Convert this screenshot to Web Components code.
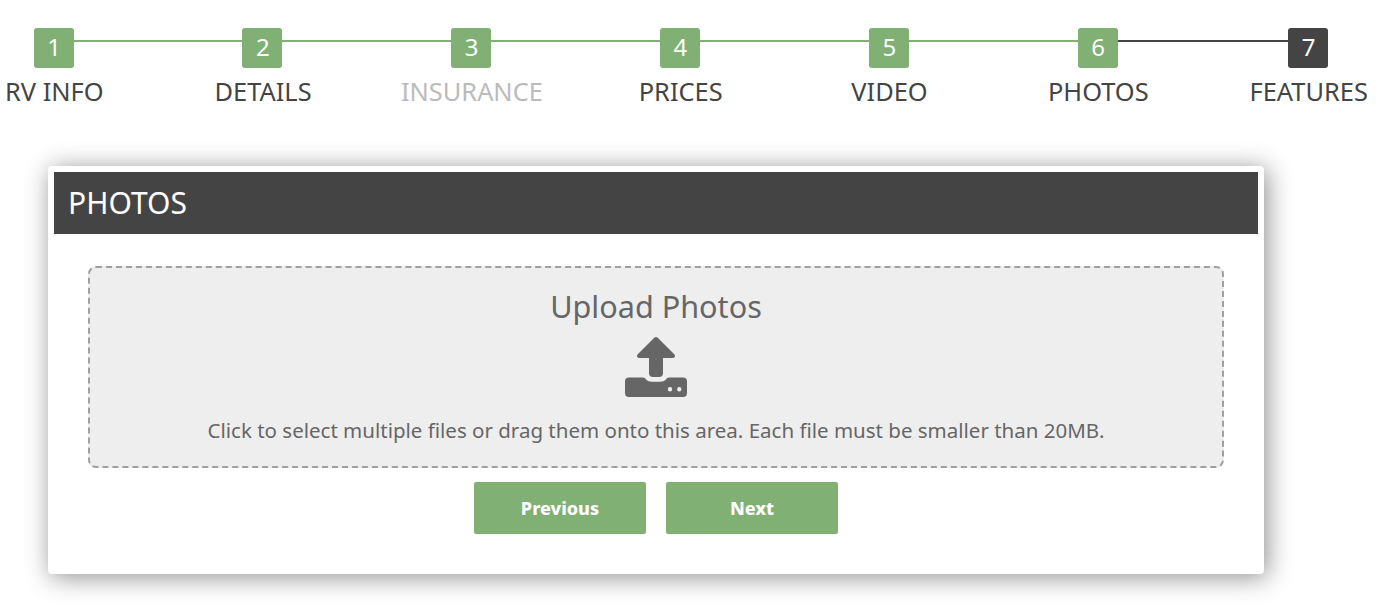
<!DOCTYPE html>
<html>
<head>
<meta charset="utf-8">
<title>Photos</title>
<style>
  html, body { margin: 0; padding: 0; background: #fff; font-family: "Noto Sans", "Open Sans", sans-serif; }
  body { min-height: 100vh; }
  form-card > div[slot="actions"] { display: flex; justify-content: center; gap: 20px; }
</style>
</head>
<body>
<step-bar>
  <step-item num="1" state="done">RV INFO</step-item>
  <step-line state="done"></step-line>
  <step-item num="2" state="done">DETAILS</step-item>
  <step-line state="done"></step-line>
  <step-item num="3" state="skipped">INSURANCE</step-item>
  <step-line state="done"></step-line>
  <step-item num="4" state="done">PRICES</step-item>
  <step-line state="done"></step-line>
  <step-item num="5" state="done">VIDEO</step-item>
  <step-line state="done"></step-line>
  <step-item num="6" state="done">PHOTOS</step-item>
  <step-line></step-line>
  <step-item num="7">FEATURES</step-item>
</step-bar>
<form-card heading="PHOTOS">
  <upload-zone heading="Upload Photos">Click to select multiple files or drag them onto this area. Each file must be smaller than 20MB.</upload-zone>
  <div slot="actions">
    <action-button>Previous</action-button>
    <action-button>Next</action-button>
  </div>
</form-card>

<script>
class StepBar extends HTMLElement {
    constructor() {
        super();
        this.shadowDOM = this.attachShadow({ mode: "open" });
    }
    connectedCallback() {
        this.shadowDOM.innerHTML = `
      <style>
        :host {
            display: flex;
            align-items: flex-start;
            padding: 28px 48px 0 33.6px;
        }
      </style>
      <slot></slot>
    `;
    }
}
customElements.define("step-bar", StepBar);

class StepItem extends HTMLElement {
    constructor() {
        super();
        this.shadowDOM = this.attachShadow({ mode: "open" });
    }
    connectedCallback() {
        this.shadowDOM.innerHTML = `
      <style>
        :host {
            display: flex;
            flex-direction: column;
            align-items: center;
            flex: 0 0 40px;
            width: 40px;
            color: #444;
        }
        :host([state="skipped"]) { color: #bbb; }
        .num {
            width: 40px;
            height: 40px;
            box-sizing: border-box;
            padding-left: 1px;
            border-radius: 3px;
            background: #444;
            color: #fff;
            font-size: 24px;
            line-height: 38px;
            text-align: center;
        }
        :host([state="done"]) .num,
        :host([state="skipped"]) .num { background: #80b074; }
        .label {
            margin-top: 6px;
            padding-left: 1.4px;
            font-size: 25.4px;
            line-height: 34px;
            white-space: nowrap;
        }
      </style>
      <div class="num">${this.getAttribute("num")}</div>
      <div class="label"><slot></slot></div>
    `;
    }
}
customElements.define("step-item", StepItem);

class StepLine extends HTMLElement {
    constructor() {
        super();
        this.shadowDOM = this.attachShadow({ mode: "open" });
    }
    connectedCallback() {
        this.shadowDOM.innerHTML = `
      <style>
        :host {
            display: block;
            flex: 0 0 168.8px;
            height: 2px;
            margin-top: 12px;
            background: #444;
        }
        :host([state="done"]) { background: #80b074; }
        :host(:not([state])) { flex: 1; }
      </style>
    `;
    }
}
customElements.define("step-line", StepLine);

class FormCard extends HTMLElement {
    constructor() {
        super();
        this.shadowDOM = this.attachShadow({ mode: "open" });
    }
    connectedCallback() {
        this.shadowDOM.innerHTML = `
      <style>
        :host {
            display: block;
            box-sizing: border-box;
            width: 1216px;
            height: 408px;
            margin: 58px 0 0 48px;
            padding: 6px;
            background: #fff;
            border-radius: 4px;
            box-shadow: 3px 3px 26px rgba(0, 0, 0, 0.45);
        }
        h2 {
            margin: 0;
            height: 62px;
            padding: 0 14px;
            background: #444;
            color: #fff;
            font-size: 30px;
            font-weight: 400;
            line-height: 62px;
        }
        .body { padding: 32px 34px 0; }
        .actions { margin-top: 14px; }
      </style>
      <h2>${this.getAttribute("heading")}</h2>
      <div class="body">
        <slot></slot>
        <div class="actions"><slot name="actions"></slot></div>
      </div>
    `;
    }
}
customElements.define("form-card", FormCard);

class UploadZone extends HTMLElement {
    constructor() {
        super();
        this.shadowDOM = this.attachShadow({ mode: "open" });
    }
    connectedCallback() {
        this.shadowDOM.innerHTML = `
      <style>
        :host {
            display: flex;
            flex-direction: column;
            align-items: center;
            box-sizing: border-box;
            height: 202px;
            padding-top: 19px;
            background: #eee;
            border: 2px dashed #a0a0a0;
            border-radius: 8px;
            color: #666;
        }
        .title { font-size: 30.6px; line-height: 38px; }
        svg { display: block; margin-top: 11px; }
        .hint { margin-top: 17px; font-size: 20.5px; line-height: 30px; }
      </style>
      <div class="title">${this.getAttribute("heading")}</div>
      <svg width="62" height="62" viewBox="0 0 62 62" fill="#666">
        <path d="M31 1 Q32 1 33 2 L49.5 18.5 Q51 21 48 22 L38 22 L38 37 Q38 41 34 41 L28 41 Q24 41 24 37 L24 22 L14 22 Q11 21 12.5 18.5 L29 2 Q30 1 31 1Z"/>
        <path fill-rule="evenodd" d="M4 41.5 L18 41.5 Q20 41.5 21 43.5 Q23 45.7 27 45.7 L35 45.7 Q39 45.7 41 43.5 Q42 41.5 44 41.5 L58 41.5 Q62 41.5 62 45.5 L62 57 Q62 61 58 61 L4 61 Q0 61 0 57 L0 45.5 Q0 41.5 4 41.5Z M42.8 53.3 a2.2 2.2 0 1 0 4.4 0 a2.2 2.2 0 1 0 -4.4 0Z M52.1 53.3 a2.2 2.2 0 1 0 4.4 0 a2.2 2.2 0 1 0 -4.4 0Z"/>
      </svg>
      <div class="hint"><slot></slot></div>
    `;
    }
}
customElements.define("upload-zone", UploadZone);

class ActionButton extends HTMLElement {
    constructor() {
        super();
        this.shadowDOM = this.attachShadow({ mode: "open" });
    }
    connectedCallback() {
        this.shadowDOM.innerHTML = `
      <style>
        :host {
            display: block;
            width: 172px;
            height: 52px;
            background: #80b074;
            border-radius: 2px;
            color: #fff;
            font-size: 18px;
            font-weight: 800;
            line-height: 52px;
            text-align: center;
            cursor: pointer;
        }
      </style>
      <slot></slot>
    `;
    }
}
customElements.define("action-button", ActionButton);
</script>
</body>
</html>
